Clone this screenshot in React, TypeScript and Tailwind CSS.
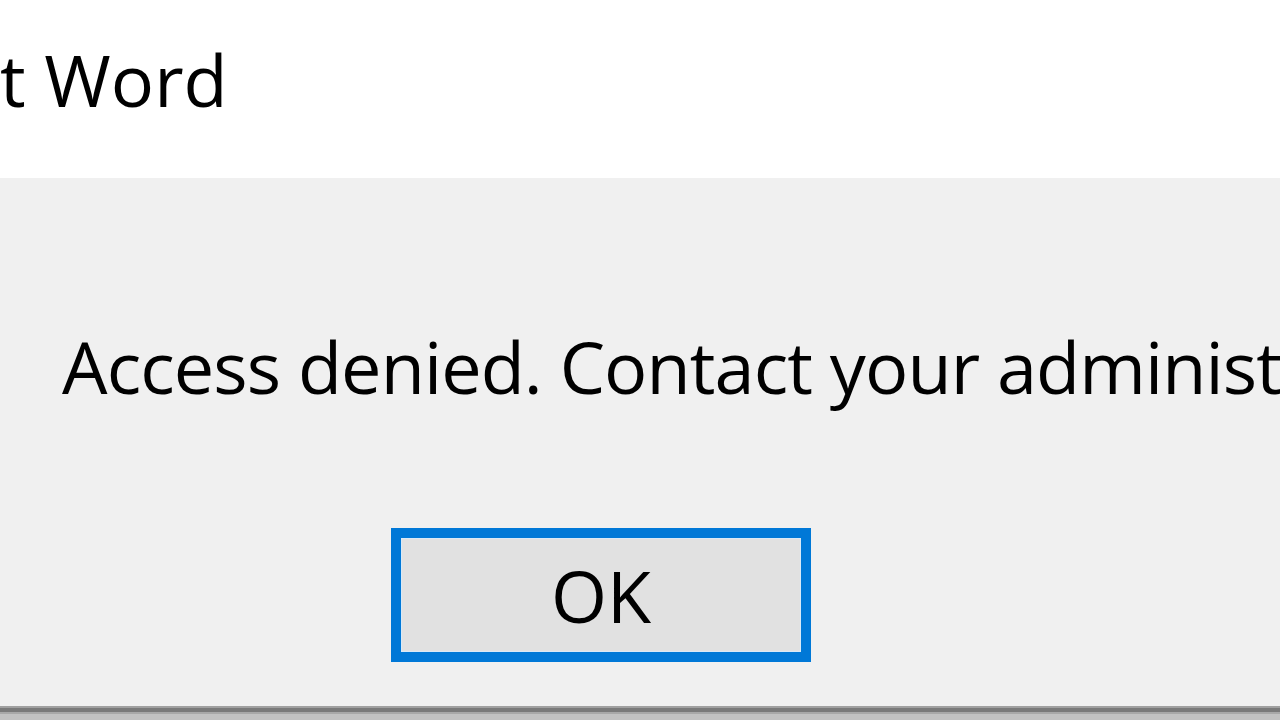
export default function App() {
  return (
    <div
      className="flex h-[720px] w-[1280px] flex-col overflow-hidden bg-white text-black"
      style={{ fontFamily: '"Open Sans", "Noto Sans", sans-serif' }}
    >
      <div className="h-[178px] shrink-0 bg-white pt-[43px]">
        <div className="whitespace-nowrap text-[72px] leading-[72px]">t Word</div>
      </div>
      <div className="flex flex-1 flex-col overflow-hidden bg-[#f0f0f0]">
        <div className="whitespace-nowrap pl-[62px] pt-[152px] text-[72px] leading-[72px] tracking-[-0.9px]">
          Access denied. Contact your administrator.
        </div>
        <div className="pl-[391px] pt-[126px]">
          <button className="flex h-[134px] w-[420px] items-center justify-center border-[10px] border-[#0078d7] bg-[#e1e1e1] text-[72px] leading-[72px] outline outline-1 -outline-offset-[11px] outline-[#d9e9f7]">
            OK
          </button>
        </div>
      </div>
      <div className="h-[2px] shrink-0 bg-[#a0a0a0]" />
      <div className="h-[4px] shrink-0 bg-[#7a7a7a]" />
      <div className="h-[2px] shrink-0 bg-[#a8a8a8]" />
      <div className="h-[6px] shrink-0 bg-[#c2c2c2]" />
    </div>
  )
}
